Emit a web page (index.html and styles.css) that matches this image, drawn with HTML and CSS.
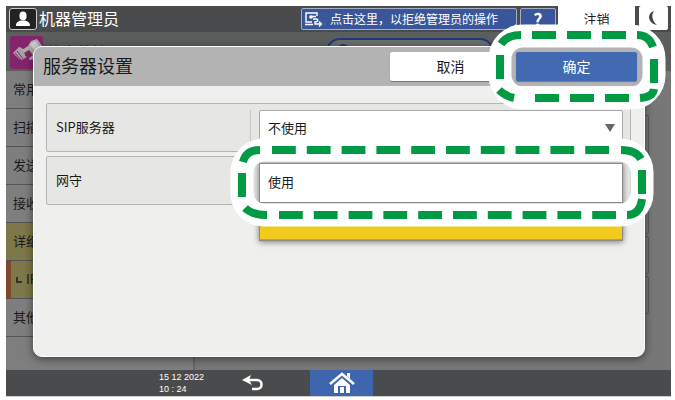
FILE: index.html
```html
<!DOCTYPE html>
<html lang="zh-CN">
<head>
<meta charset="UTF-8">
<meta name="viewport" content="width=device-width, initial-scale=1">
<title>服务器设置</title>
<link rel="stylesheet" href="styles.css">
</head>
<body>
<div class="screen">
    <header class="topbar">
        <span class="user-icon">
            <svg width="18" height="16" viewBox="0 0 18 16"><ellipse cx="9" cy="5" rx="3.6" ry="4.4" fill="#fff"/><path d="M2 15c0-4 2-4.500 5-5.500h4c3 1 5 1.500 5 5.500z" fill="#fff"/></svg>
        </span>
        <span class="user-name">机器管理员</span>
        <button class="notice-btn">
            <svg width="20" height="18" viewBox="0 0 20 18" fill="none" stroke="#fff" stroke-width="1.400"><path d="M13 6V3H2v9h6M1 14.500h8"/><circle cx="7" cy="7" r="1.800" fill="#fff" stroke="none"/><path d="M7 6.500h5M9 9h3c3 0 2 3-1 3v2h6M15 11.500l2.500 2.500-2.500 2.500"/></svg>
            <span>点击这里，以拒绝管理员的操作</span>
        </button>
        <button class="help-btn">?</button>
        <button class="logout-btn">注销</button>
        <button class="sleep-btn" aria-label="睡眠">
            <svg width="14" height="18" viewBox="0 0 14 18"><path d="M7 2C0 4 0 14 10 16 5 12 4 6 7 2z" fill="#444"/></svg>
        </button>
    </header>

    <div class="app-head">
        <span class="fax-icon">
            <svg width="33" height="33" viewBox="0 0 33 33"><path d="M3 17l6-6 3 1 6 8-6 4-3-1z" fill="#a9a0a6"/><path d="M12 14l6-4 3-5 6-2 6 8v10l-13 3z" fill="#aaa"/><path d="M14 17l5-3 4 5-5 4z" fill="#7a2a62"/><path d="M20 8l5-3 4 5-5 4z" fill="#ccc"/><path d="M5 17l6 7M7 15l6 8M15 20l5-4M17 22l5-4" stroke="#84246c"/></svg>
        </span>
        <span class="app-name">传真特性</span>
        <span class="search-box">
            <svg width="16" height="16" viewBox="0 0 16 16" fill="none" stroke="#1f3b75" stroke-width="2"><circle cx="7" cy="7" r="5"/><path d="M11 11l4 4"/></svg>
        </span>
    </div>

    <div class="app-body">
        <nav class="side-menu">
            <a href="#">常用</a>
            <a href="#">扫描</a>
            <a href="#">发送</a>
            <a href="#">接收</a>
            <a href="#" class="open">详细</a>
            <a href="#" class="open current"><span class="branch"></span>IP</a>
            <a href="#">其他</a>
        </nav>
        <div class="app-list">
            <div class="app-item tall"></div>
            <div class="app-item"></div>
            <div class="app-item"></div>
        </div>
    </div>

    <footer class="bottombar">
        <time class="clock" datetime="2022-12-15T10:24">15 12 2022<br>10 : 24</time>
        <button class="back-btn" aria-label="返回">
            <svg width="22" height="18" viewBox="0 0 22 18"><path d="M5 6h10c6 0 6 9 0 9h-5" fill="none" stroke="#fff" stroke-width="2.500"/><path d="M0 6l9-5-2 5 3 5z" fill="#fff"/></svg>
        </button>
        <button class="home-btn" aria-label="主页">
            <svg width="26" height="22" viewBox="0 0 26 22"><path d="M1 12L13 2l12 10" fill="none" stroke="#fff" stroke-width="2.500"/><path d="M18 1h3v6l-3-3zM5 13l8-7 8 7v8h-4v-7h-8v7H5z" fill="#fff"/><path d="M11 15h4v6h-4z" fill="#fff"/></svg>
        </button>
    </footer>

    <section class="dialog">
        <div class="dialog-head">
            <h1>服务器设置</h1>
            <button class="cancel-btn">取消</button>
            <div class="ok-wrap">
                <button class="ok-btn">确定</button>
                <svg class="mark mark-ok" width="180" height="90" viewBox="487 22 180 90">
                    <rect class="halo" x="500" y="36" width="154" height="62" rx="23"/>
                    <g class="dash">
                        <path d="M501 44Q507 35 521 35M532 35h24M567 35h24M602 35h24M637 35Q649 35 653 47"/>
                        <path d="M654 59v24M654 89Q653 97 640 98M629 98h-24M594 98h-24M559 98h-24M514 98Q505 96 499 90M500 79v-24"/>
                    </g>
                </svg>
            </div>
        </div>
        <div class="settings">
            <div class="setting">
                <label class="setting-name" for="sipServer">SIP服务器</label>
                <div class="setting-field">
                    <select id="sipServer"><option>不使用</option><option>使用</option></select>
                </div>
            </div>
            <div class="setting">
                <span class="setting-name" id="gatekeeper">网守</span>
                <div class="setting-field">
                    <div class="drop-list" role="listbox" aria-labelledby="gatekeeper">
                        <div class="drop-item" role="option">使用</div>
                        <div class="drop-item selected" role="option" aria-selected="true"></div>
                    </div>
                    <svg class="mark mark-list" width="428" height="92" viewBox="229 136 428 92">
                        <rect class="halo" x="242" y="150" width="400" height="65" rx="22"/>
                        <g class="dash">
                            <path d="M243 162Q246 150 260 150M621 150Q636 150 641 159M642 170v24M642 199Q640 215 627 215M267 215Q252 215 245 208M242 197v-24"/>
                            <path d="M272 150H612M616 215H278" stroke-dasharray="23.800 11"/>
                        </g>
                    </svg>
                </div>
            </div>
        </div>
    </section>
</div>
</body>
</html>
```
FILE: styles.css
```css
* {
    box-sizing: border-box;
}
body {
    margin: 0;
    padding: 6px 4px 3px 6px;
    background: #fff;
    font-family: "Noto Sans CJK SC", sans-serif;
    font-size: 13px;
    color: #1a1a1a;
}
button, select {
    font-family: inherit;
    margin: 0;
    padding: 0;
    border: none;
}
.screen {
    position: relative;
    display: flex;
    flex-direction: column;
    min-height: calc(100vh - 9px);
    background: #777;
    border-bottom: 1px solid #ccc;
}

/* top bar */
.topbar {
    display: flex;
    height: 26px;
    background: #4a4b4c;
    color: #fff;
}
.user-icon {
    display: flex;
    align-items: center;
    justify-content: center;
    width: 28px;
    height: 22px;
    margin: 2px 2px 2px 3px;
    background: #222;
    border: 1px solid #ccc;
    border-radius: 3px;
}
.user-name {
    flex: 1;
    font-size: 16px;
    line-height: 24px;
}
.notice-btn {
    position: relative;
    display: flex;
    align-items: center;
    width: 216px;
    height: 22px;
    margin: 2px 3px 0 0;
    padding-left: 2px;
    gap: 6px;
    background: #3a569b;
    border: 1px solid #a4adc4;
    border-radius: 2px;
    color: #fff;
    font-size: 12px;
    white-space: nowrap;
}
.notice-btn span {
    line-height: 18px;
}
.notice-btn::after {
    content: "";
    position: absolute;
    right: 0;
    bottom: 1px;
    border-bottom: 4px solid #fff;
    border-left: 4px solid transparent;
}
.help-btn {
    width: 36px;
    height: 22px;
    margin: 2px 2px 0 0;
    background: #3a569b;
    border: 1px solid #a4adc4;
    border-radius: 2px;
    color: #fff;
    font-size: 18px;
    font-weight: bold;
    line-height: 16px;
}
.logout-btn {
    width: 77px;
    padding-bottom: 2px;
    background: #fff;
    color: #1a1a1a;
    font-size: 13px;
}
.sleep-btn {
    display: flex;
    align-items: center;
    justify-content: center;
    width: 29px;
    height: 24px;
    margin: 0 3px 0 4px;
    background: #fff;
    border-radius: 2px;
}

/* page behind the dialog */
.app-head {
    display: flex;
    height: 39px;
    padding: 4px;
    background: #5c5e5e;
}
.fax-icon {
    width: 33px;
    height: 33px;
    background: #84246c;
    border-radius: 3px;
    overflow: hidden;
}
.app-name {
    margin-left: 4px;
    width: 279px;
    font-size: 15px;
    line-height: 32px;
}
.search-box {
    width: 168px;
    height: 28px;
    margin-top: 2px;
    padding: 3px 8px;
    background: #6c6e70;
    border: 2px solid #1f3b75;
    border-radius: 14px;
}
.app-body {
    flex: 1;
    display: flex;
}
.side-menu {
    width: 189px;
    background: #7e7e7e;
    border-right: 2px solid #666;
}
.side-menu a {
    display: block;
    padding-left: 7px;
    height: 38px;
    line-height: 36px;
    border-bottom: 1px solid #505358;
    color: #1a1a1a;
    text-decoration: none;
}
.side-menu a.open {
    background: #7d7849;
}
.side-menu a.current {
    padding-left: 5px;
    border-left: 5px solid #80472b;
}
.branch {
    display: inline-block;
    width: 6px;
    height: 6px;
    margin-right: 4px;
    vertical-align: middle;
    border-left: 2px solid #333;
    border-bottom: 2px solid #333;
}
.app-list {
    flex: 1;
    display: flex;
    flex-direction: column;
    gap: 2px;
    padding: 44px 22px 0 10px;
}
.app-item {
    height: 38px;
    border: 1px solid #5c5c5c;
    border-radius: 2px;
}
.app-item.tall {
    height: 119px;
}

/* bottom bar */
.bottombar {
    display: flex;
    align-items: center;
    height: 26px;
    background: #4a4b4c;
    color: #fff;
}
.clock {
    width: 78px;
    margin-left: 153px;
    font-family: "Liberation Sans Narrow", "Liberation Sans", sans-serif;
    font-size: 9px;
    line-height: 12px;
}
.back-btn {
    display: flex;
    width: 73px;
    padding-left: 5px;
    background: none;
}
.home-btn {
    display: flex;
    align-items: center;
    justify-content: center;
    width: 63px;
    height: 26px;
    background: #3e66ae;
}

/* dialog */
.dialog {
    position: absolute;
    top: 40px;
    right: 26px;
    bottom: 39px;
    left: 27px;
    background: #efefee;
    border: 1px solid #fff;
    border-radius: 9px;
    box-shadow: 0 2px 8px rgba(0,0,0,0.5);
}
.dialog-head {
    display: flex;
    align-items: center;
    height: 39px;
    padding: 0 7px 0 9px;
    background: #b3b3b3;
    border-radius: 8px 8px 0 0;
}
.dialog-head h1 {
    flex: 1;
    margin: 0;
    font-size: 18px;
    font-weight: normal;
    line-height: 22px;
    padding-bottom: 4px;
}
.dialog-head button {
    width: 121px;
    height: 29px;
    padding-bottom: 2px;
    border-radius: 2px;
    font-size: 14px;
    box-shadow: 0 1px 1px #777;
}
.cancel-btn {
    background: #fff;
    color: #1a1a1a;
}
.ok-wrap {
    position: relative;
    margin-left: 5px;
}
.ok-btn {
    background: #416ab3;
    color: #fff;
}
.settings {
    display: flex;
    flex-direction: column;
    gap: 4px;
    padding: 17px 13px 0 12px;
}
.setting {
    display: flex;
    height: 49px;
    padding: 6px 7px 0 9px;
    background: #e6e6e5;
    border: 1px solid #b5b5b5;
    border-radius: 2px;
}
.setting-name {
    width: 195px;
    height: 38px;
    line-height: 34px;
    border-right: 1px solid #c6c6c6;
}
.setting-field {
    position: relative;
    flex: 1;
    margin-left: 8px;
}
.setting-field select {
    width: 100%;
    height: 34px;
    padding: 0 8px;
    appearance: none;
    background: #fff;
    border: 1px solid #aaa;
    border-radius: 2px;
    color: #1a1a1a;
    font-size: 13px;
}
.setting-field:has(select)::after {
    content: "";
    position: absolute;
    top: 14px;
    right: 8px;
    border: 5px solid transparent;
    border-top: 8px solid #666;
    border-bottom: none;
}
.drop-list {
    position: absolute;
    top: 0;
    left: 0;
    right: 0;
    background: #fff;
    border: 1px solid #8a8a8a;
    box-shadow: 0 1px 6px rgba(0,0,0,0.5);
}
.drop-item {
    height: 38px;
    padding-left: 8px;
    line-height: 36px;
}
.drop-item.selected {
    background: #f3cb1f;
    border-top: 1px solid #8a8a8a;
    border-bottom: 1px solid #c9a410;
}

/* dashed marks */
.mark {
    position: absolute;
    z-index: 2;
    pointer-events: none;
}
.mark-ok {
    top: -30px;
    left: -29px;
}
.mark-list {
    top: -27px;
    left: -30px;
}
.halo {
    fill: none;
    stroke: #fff;
    stroke-width: 23px;
}
.dash {
    fill: none;
    stroke: #009944;
    stroke-width: 8px;
}
```
